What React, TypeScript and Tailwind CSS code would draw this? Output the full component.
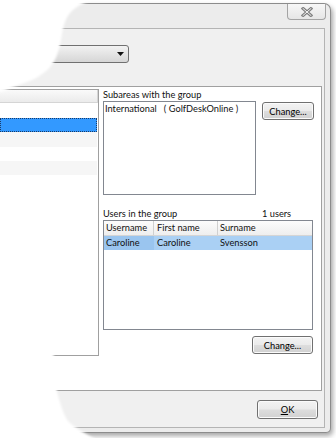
const WinButton = ({ children, className }: { children: React.ReactNode; className: string }) => (
  <div
    className={`flex items-center justify-center rounded-[3px] border border-[#707070] bg-[linear-gradient(#f3f3f3_0%,#ebebeb_48%,#dddddd_52%,#d1d1d1_100%)] shadow-[inset_0_0_0_1px_#fbfbfb] text-black ${className}`}
  >
    {children}
  </div>
);

const leftRows = [
  { h: 'h-[15px]', bg: 'bg-white' },
  { h: 'h-[14px]', bg: 'bg-[#3399ff] outline-1 outline-dotted outline-[#1a3a66] -outline-offset-1' },
  { h: 'h-[15px]', bg: 'bg-[#f6f6f6]' },
  { h: 'h-[14px]', bg: 'bg-white' },
  { h: 'h-[14px]', bg: 'bg-[#f6f6f6]' },
];

export default function App() {
  return (
    <div className="relative h-[438px] w-[336px] overflow-hidden bg-white font-[Lato,'Liberation_Sans',sans-serif] text-[9.25px] leading-[13px] text-[#111]">
      {/* window */}
      <div className="pt-[3px]">
        <div className="flex h-[430px] w-[331px] flex-col rounded-tr-[7px] rounded-br-[5px] border border-l-0 border-[#8c8c8c] bg-[#ececec] shadow-[2px_3px_5px_rgba(0,0,0,0.35)]">
          {/* title bar */}
          <div className="flex h-[24px] justify-end pr-[4px]">
            <div className="flex h-[16px] w-[39px] items-center justify-center rounded-b-[4px] border border-t-0 border-[#a4a4a4] bg-[linear-gradient(#f7f7f7,#e6e6e6)]">
              <svg width="12" height="10" viewBox="0 0 12 10">
                <path d="M2 1.5 L10 8.5 M10 1.5 L2 8.5" stroke="#7d7d7d" strokeWidth="3" strokeLinecap="square" />
                <path d="M2 1.5 L10 8.5 M10 1.5 L2 8.5" stroke="#f4f4f4" strokeWidth="1" strokeLinecap="square" />
              </svg>
            </div>
          </div>

          {/* client area */}
          <div className="mr-[5px] flex h-[400px] flex-col border border-l-0 border-[#b4b4b4] bg-[#f0f0f0]">
            <div className="mt-[16px] ml-[10px] flex h-[18px] w-[119px] items-center justify-end rounded-[3px] border border-[#707070] bg-[linear-gradient(#f2f2f2,#e4e4e4_50%,#d6d6d6)] pr-[4px]">
              <svg width="7" height="4" viewBox="0 0 7 4">
                <path d="M0 0 H7 L3.5 4 Z" fill="#111" />
              </svg>
            </div>

            {/* white panel */}
            <div className="mt-[23px] mr-[2px] flex h-[305px] border border-l-0 border-[#a0a0a0] bg-white">
              {/* left list */}
              <div className="mt-[2px] flex h-[267px] w-[99px] flex-col border border-l-0 border-[#a0a0a0]">
                <div className="h-[13px] border-b border-r border-[#d5d5d5] bg-[linear-gradient(#fafafa,#ebebeb)]" />
                {leftRows.map((r, i) => (
                  <div key={i} className={`${r.h} ${r.bg} mr-px`} />
                ))}
              </div>

              {/* right side */}
              <div className="ml-[4px] flex flex-col pt-[2px]">
                <div className="h-[12px] leading-[12px]">Subareas with the group</div>
                <div className="flex">
                  <div className="h-[94px] w-[153px] border border-[#828790] bg-white px-[1px]">
                    International&nbsp;&nbsp;&nbsp;( GolfDeskOnline )
                  </div>
                  <WinButton className="mt-px ml-[6px] h-[18px] w-[52px]">Change...</WinButton>
                </div>

                <div className="mt-[13px] flex h-[12px] leading-[12px]">
                  <div className="w-[159px]">Users in the group</div>
                  <div>1 users</div>
                </div>
                <div className="flex h-[110px] w-[210px] flex-col border border-[#828790] bg-white">
                  <div className="flex h-[15px] border-b border-[#d5d5d5] bg-[linear-gradient(#fcfcfc,#eeeeee)] leading-[14px]">
                    <div className="w-[50px] border-r border-[#d0d0d0] pl-[2px]">Username</div>
                    <div className="w-[64px] border-r border-[#d0d0d0] pl-[3px]">First name</div>
                    <div className="flex-1 pl-[2px]">Surname</div>
                  </div>
                  <div className="flex h-[14px] bg-[#aad0f4] leading-[14px]">
                    <div className="w-[50px] bg-[#9ac5ef] pl-[2px]">Caroline</div>
                    <div className="w-[64px] pl-[3px]">Caroline</div>
                    <div className="flex-1 pl-[2px]">Svensson</div>
                  </div>
                </div>
                <div className="mt-[6px] flex w-[210px] justify-end">
                  <WinButton className="h-[18px] w-[61px]">Change...</WinButton>
                </div>
              </div>
            </div>

            {/* bottom buttons */}
            <div className="mt-[9px] mr-[6px] flex justify-end">
              <WinButton className="h-[19px] w-[61px]">
                <span>
                  <span className="underline">O</span>K
                </span>
              </WinButton>
            </div>
          </div>
        </div>
      </div>

      {/* torn left edge */}
      <svg className="pointer-events-none absolute inset-0" width="336" height="438" viewBox="0 0 336 438">
        <defs>
          <filter id="soft" x="-20%" y="-20%" width="140%" height="140%">
            <feGaussianBlur stdDeviation="1.3" />
          </filter>
        </defs>
        <path
          d="M-20 -20 H92 V0 C80 4 69 10 65 22 C61 32 62 42 57 55 C53 66 45 74 32 80 C22 84 14 86 4 91 L-20 96 V300 C20 318 44 336 54 356 C56 370 56 384 57 392 C60 402 63 414 68 421 C74 428 86 433 104 445 L-20 460 Z"
          fill="#ffffff"
          filter="url(#soft)"
        />
      </svg>
    </div>
  );
}
